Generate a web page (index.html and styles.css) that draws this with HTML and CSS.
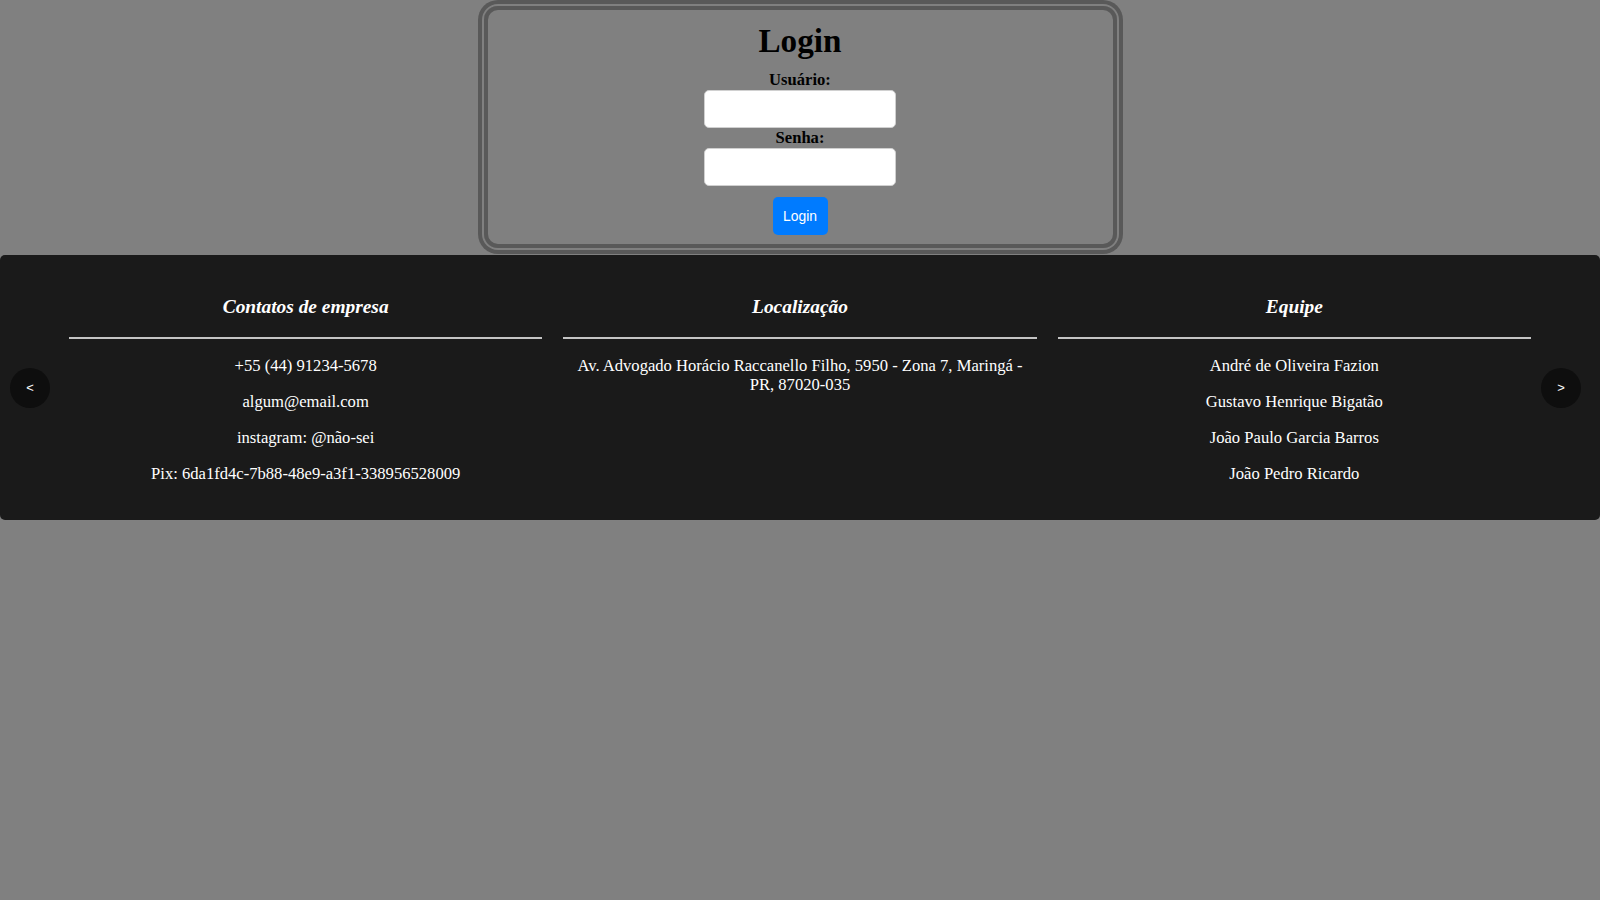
FILE: index.html
```html
<!DOCTYPE html>
<html lang="pt-BR">
<head>
<meta charset="UTF-8">
<title>Login</title>
<link rel="stylesheet" href="styles.css">
</head>
<body>
<div class="login-box">
  <h1 class="login-title">Login</h1>
  <form class="login-form">
    <label class="field-label" for="user">Usuário:</label>
    <input class="field-input" type="text" id="user">
    <label class="field-label" for="pass">Senha:</label>
    <input class="field-input" type="password" id="pass">
    <button class="login-btn" type="button">Login</button>
  </form>
</div>
<footer class="footer">
  <button class="nav-btn nav-prev" type="button">&lt;</button>
  <div class="columns">
    <div class="col">
      <h3 class="col-title">Contatos de empresa</h3>
      <hr class="col-rule">
      <p class="col-text">+55 (44) 91234-5678</p>
      <p class="col-text">algum@email.com</p>
      <p class="col-text">instagram: @não-sei</p>
      <p class="col-text">Pix: 6da1fd4c-7b88-48e9-a3f1-338956528009</p>
    </div>
    <div class="col">
      <h3 class="col-title">Localização</h3>
      <hr class="col-rule">
      <p class="col-text">Av. Advogado Horácio Raccanello Filho, 5950 - Zona 7, Maringá - PR, 87020-035</p>
    </div>
    <div class="col">
      <h3 class="col-title">Equipe</h3>
      <hr class="col-rule">
      <p class="col-text">André de Oliveira Fazion</p>
      <p class="col-text">Gustavo Henrique Bigatão</p>
      <p class="col-text">João Paulo Garcia Barros</p>
      <p class="col-text">João Pedro Ricardo</p>
    </div>
  </div>
  <button class="nav-btn nav-next" type="button">&gt;</button>
</footer>
</body>
</html>
```
FILE: styles.css
```css
html, body {
  margin: 0;
  padding: 0;
}
body {
  background: #808080;
  font-family: "Liberation Serif", "Times New Roman", serif;
  font-size: 16.6px;
  color: #000;
}
.login-box {
  box-sizing: border-box;
  width: 633px;
  margin: 6px auto 7px;
  border: 4px solid #595959;
  border-radius: 14px;
  box-shadow: 0 0 0 2px #808080, 0 0 0 6px #595959;
  padding: 12px 0 9.3px;
  display: flex;
  flex-direction: column;
  align-items: center;
}
.login-title {
  margin: 0 0 10px;
  font-size: 33.2px;
  line-height: 38px;
  font-weight: bold;
}
.login-form {
  display: flex;
  flex-direction: column;
  align-items: center;
}
.field-label {
  display: block;
  font-weight: bold;
  line-height: 19.5px;
}
.field-input {
  box-sizing: border-box;
  width: 192px;
  height: 38.7px;
  border: 1px solid #d0d0d0;
  border-radius: 5px;
  background: #fff;
  margin: 0;
}
.login-btn {
  margin-top: 11px;
  box-sizing: border-box;
  width: 55px;
  height: 37.3px;
  padding: 0;
  border: none;
  border-radius: 5px;
  background: #007bff;
  color: #fff;
  font-family: "Liberation Sans", Arial, sans-serif;
  font-size: 13.9px;
}
.footer {
  position: relative;
  background: #1a1a1a;
  border-radius: 5px;
  padding: 22px 69px 20px;
  color: #fff;
}
.nav-btn {
  position: absolute;
  top: 50%;
  transform: translateY(-50%);
  width: 40px;
  height: 40px;
  border-radius: 50%;
  border: none;
  background: #0e0e0e;
  color: #fff;
  font-family: "Liberation Sans", Arial, sans-serif;
  font-size: 13px;
  padding: 0;
}
.nav-prev {
  left: 10px;
}
.nav-next {
  right: 19px;
}
.columns {
  display: flex;
  gap: 21px;
}
.col {
  flex: 1;
  min-width: 0;
  text-align: center;
}
.col-title {
  font-size: 19.4px;
  line-height: 22.3px;
  font-style: italic;
  font-weight: bold;
  margin: 19.4px 0 18.4px;
}
.col-rule {
  margin: 8px 0;
  border: none;
  border-top: 2px solid #c4c4c4;
  height: 0;
}
.col-text {
  margin: 16.9px 0;
  line-height: 19.2px;
}
```
